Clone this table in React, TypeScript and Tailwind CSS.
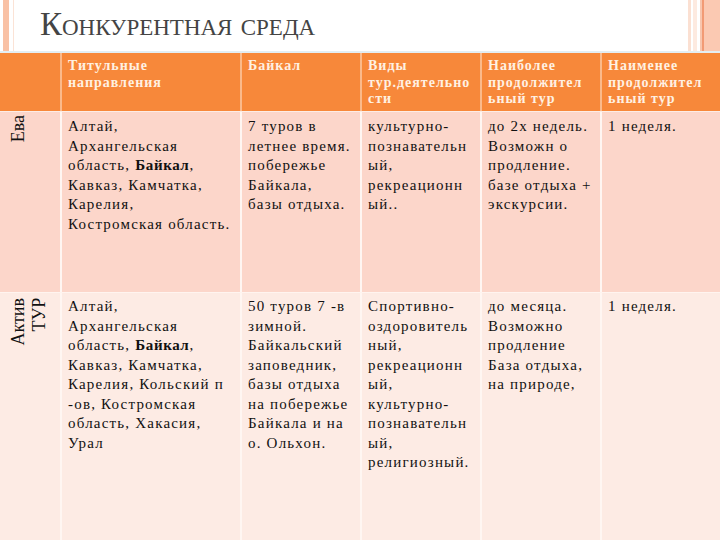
import React from "react";

type Line = string | { text: string; bold: string; after: string };

const headers: string[][] = [
  ["Титульные", "направления"],
  ["Байкал"],
  ["Виды", "тур.деятельно", "сти"],
  ["Наиболее", "продолжител", "ьный тур"],
  ["Наименее", "продолжител", "ьный тур"],
];

const row1: Line[][] = [
  ["Алтай,", "Архангельская", { text: "область, ", bold: "Байкал", after: "," }, "Кавказ, Камчатка,", "Карелия,", "Костромская область."],
  ["7 туров в", "летнее время.", "побережье", "Байкала,", "базы отдыха."],
  ["культурно-", "познавательн", "ый,", "рекреационн", "ый.."],
  ["до 2х недель.", "Возможн о", "продление.", "базе отдыха +", "экскурсии."],
  ["1 неделя."],
];

const row2: Line[][] = [
  ["Алтай,", "Архангельская", { text: "область, ", bold: "Байкал", after: "," }, "Кавказ, Камчатка,", "Карелия, Кольский п", "-ов, Костромская", "область, Хакасия,", "Урал"],
  ["50 туров 7 -в", "зимной.", "Байкальский", "заповедник,", "базы отдыха", "на побережье", "Байкала и на", "о. Ольхон."],
  ["Спортивно-", "оздоровитель", "ный,", "рекреационн", "ый,", "культурно-", "познавательн", "ый,", "религиозный."],
  ["до месяца.", "Возможно", "продление", "База отдыха,", "на природе,"],
  ["1 неделя."],
];

const widths = ["w-[180px]", "w-[120px]", "w-[120px]", "w-[120px]", "flex-1"];

function Cell({ lines, w, top }: { lines: Line[]; w: string; top: string }) {
  return (
    <div className={`${w} ${top} shrink-0 border-l-2 border-[#fff6f2] pl-[6px] text-[15px] leading-[19.5px] tracking-[1.2px] text-[#111111] whitespace-nowrap`}>
      {lines.map((l, i) =>
        typeof l === "string" ? (
          <div key={i}>{l}</div>
        ) : (
          <div key={i}>
            {l.text}
            <span className="font-bold tracking-[0.6px]">{l.bold}</span>
            {l.after}
          </div>
        )
      )}
    </div>
  );
}

export default function App() {
  return (
    <div className="w-[720px] h-[540px] overflow-hidden bg-white flex flex-col font-['Liberation_Serif',serif]">
      {/* title strip */}
      <div className="h-[51px] flex shrink-0">
        <div className="w-[3px]" />
        <div className="w-[6px] bg-[#f9c1a5]" />
        <div className="w-[4px]" />
        <div className="w-[1px] bg-[#fbe3d6]" />
        <div className="w-[26px]" />
        <h1 className="pt-[5px] text-[33px] leading-[38px] text-[#444444] [font-variant:small-caps]">
          Конкурентная среда
        </h1>
        <div className="flex-1" />
        <div className="flex w-[32px]">
          <div className="w-[3px] bg-[#fbe0d2]" />
          <div className="w-[2px]" />
          <div className="w-[4px] bg-[#fdeae0]" />
          <div className="w-[3px]" />
          <div className="w-[2px] bg-[#f8c6ae]" />
          <div className="w-[2px] bg-[#f29a74]" />
          <div className="flex-1 bg-[#fbc9b2]" />
        </div>
      </div>
      <div className="h-[2px] bg-[#e3eef3] shrink-0" />

      {/* header row */}
      <div className="h-[58px] flex bg-[#f7883a] shrink-0">
        <div className="w-[60px] shrink-0" />
        {headers.map((h, i) => (
          <div
            key={i}
            className={`${widths[i]} shrink-0 border-l-2 border-[#fbb98a] pl-[6px] pt-[5px] text-[14px] leading-[16.5px] font-bold tracking-[1px] text-[#fff1e2] whitespace-nowrap overflow-hidden`}
          >
            {h.map((t, j) => (
              <div key={j}>{t}</div>
            ))}
          </div>
        ))}
      </div>
      <div className="h-[1px] bg-[#fdece4] shrink-0" />

      {/* row 1 */}
      <div className="h-[180px] flex bg-[#fcd6ca] shrink-0">
        <div className="w-[60px] shrink-0 flex pl-[8px] pt-[3px]">
          <div className="[writing-mode:vertical-rl] rotate-180 text-[18px] leading-[21px] text-end text-[#111111] h-fit">
            Ева
          </div>
        </div>
        {row1.map((c, i) => (
          <Cell key={i} lines={c} w={widths[i]} top="pt-[5px]" />
        ))}
      </div>
      <div className="h-[1px] bg-[#fff4ef] shrink-0" />

      {/* row 2 */}
      <div className="flex-1 flex bg-[#fdebe4]">
        <div className="w-[60px] shrink-0 flex pl-[8px] pt-[5px]">
          <div className="[writing-mode:vertical-rl] rotate-180 text-[18px] leading-[21px] text-end text-[#111111] h-fit">
            Актив
            <br />
            ТУР
          </div>
        </div>
        {row2.map((c, i) => (
          <Cell key={i} lines={c} w={widths[i]} top="pt-[4px]" />
        ))}
      </div>
    </div>
  );
}
